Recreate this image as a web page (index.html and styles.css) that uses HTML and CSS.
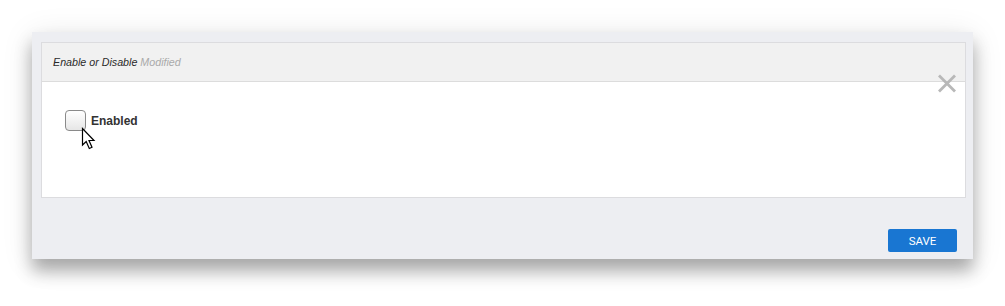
FILE: index.html
```html
<!DOCTYPE html>
<html>
<head>
<meta charset="utf-8">
<link rel="stylesheet" href="styles.css">
</head>
<body>
<div class="dialog">
  <div class="panel">
    <div class="panel-head"><span class="title">Enable or Disable</span> <span class="modified">Modified</span></div>
    <div class="panel-body">
      <label class="check">
        <span class="box"></span>
        <span class="label">Enabled</span>
        <svg class="cursor" width="15" height="23" viewBox="0 0 15 23"><path d="M1.5 1.5 L1.5 18 L5.2 14.5 L8.3 21.5 L11 20.3 L8 13.5 L13 13.5 Z" fill="#fff" stroke="#000" stroke-width="1.2" stroke-linejoin="miter"/></svg>
      </label>
    </div>
  </div>
  <svg class="close" width="20" height="19" viewBox="0 0 20 19"><path d="M2 1.5 L18 17.5 M18 1.5 L2 17.5" stroke="#b8b8b8" stroke-width="2.8"/></svg>
  <div class="footer">
    <button class="save">SAVE</button>
  </div>
</div>
</body>
</html>
```
FILE: styles.css
```css
html, body {
  margin: 0;
  padding: 0;
  background: #fff;
}
html {
  height: 100%;
}
body {
  min-height: 306px;
  box-sizing: border-box;
  padding: 32px 0 0 32px;
  font-family: "Liberation Sans", Arial, sans-serif;
}
.dialog {
  position: relative;
  width: 941px;
  height: 227px;
  box-sizing: border-box;
  background: #edeef2;
  padding: 10px 7px 7px 9px;
  display: flex;
  flex-direction: column;
  box-shadow: 0 12px 16px rgba(0,0,0,0.30), 0 4px 30px rgba(0,0,0,0.10);
}
.panel {
  background: #fff;
  border: 1px solid #dcdcdf;
  height: 156px;
  box-sizing: border-box;
  display: flex;
  flex-direction: column;
}
.panel-head {
  background: #f1f1f1;
  border-bottom: 1px solid #dcdcdc;
  height: 39px;
  box-sizing: border-box;
  padding: 13px 0 0 11px;
  font-size: 10.7px;
  font-style: italic;
  color: #2a2a2a;
}
.modified {
  color: #aaaaaa;
}
.panel-body {
  padding: 28px 0 0 23px;
}
.check {
  display: flex;
  align-items: center;
  position: relative;
}
.box {
  width: 21px;
  height: 21px;
  box-sizing: border-box;
  border: 1px solid #8a8a8a;
  border-radius: 4px;
  background: linear-gradient(#ffffff, #e6e6e6);
}
.label {
  margin-left: 5px;
  font-size: 12px;
  font-weight: bold;
  color: #333;
}
.cursor {
  position: absolute;
  left: 16px;
  top: 17px;
}
.close {
  position: absolute;
  left: 905px;
  top: 42px;
}
.footer {
  flex: 1;
  display: flex;
  justify-content: flex-end;
  align-items: flex-end;
  padding-right: 9px;
}
.save {
  width: 69px;
  height: 23px;
  border: none;
  border-radius: 2px;
  background: #1976d2;
  color: #fff;
  font-family: Roboto, "Liberation Sans", Arial, sans-serif;
  font-size: 11.5px;
  padding: 0;
}
```
